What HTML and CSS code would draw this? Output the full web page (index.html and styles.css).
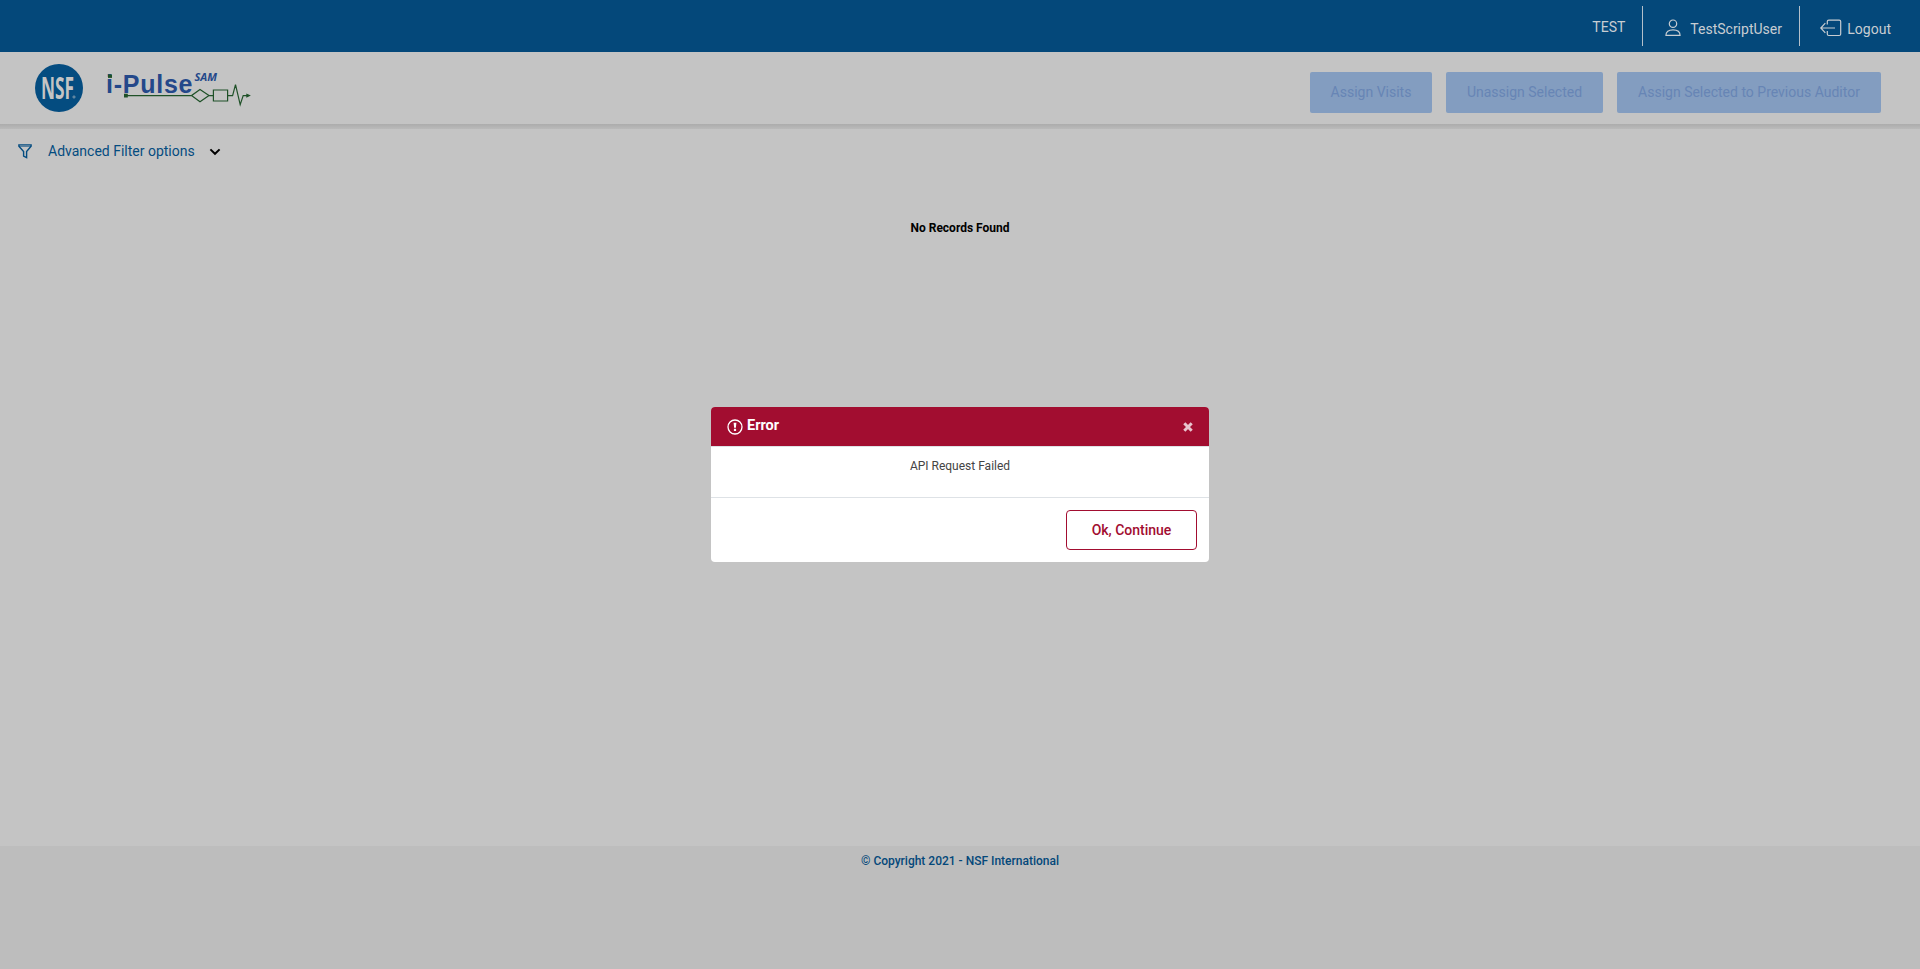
FILE: index.html
```html
<!DOCTYPE html>
<html lang="en">
<head>
<meta charset="utf-8">
<title>i-Pulse SAM</title>
<link rel="stylesheet" href="styles.css">
</head>
<body>
<div class="page">
  <nav class="topbar">
    <span class="env">TEST</span>
    <span class="user">
      <svg width="16" height="18" viewBox="0 0 16 18" fill="none" stroke="currentColor" stroke-width="1.2"><circle cx="8" cy="4.7" r="3.7"/><path d="M.9 16.4C.9 12.7 3.6 10.8 8 10.8s7.1 1.9 7.1 5.6z" stroke-linejoin="round"/></svg>
      TestScriptUser
    </span>
    <span class="logout">
      <svg width="22" height="18" viewBox="0 0 22 18" fill="none" stroke="currentColor" stroke-width="1.2"><path d="M7.3 5.5V2.6Q7.3 1.1 8.8 1.1H19.2Q20.7 1.1 20.7 2.6V15Q20.7 16.5 19.2 16.5H8.8Q7.3 16.5 7.3 15V12M15 9H1M5.3 4.2L.8 9l4.5 4.8"/></svg>
      Logout
    </span>
  </nav>
  <header class="header">
    <div class="brand">
      <svg width="48" height="48" viewBox="0 0 48 48"><circle cx="24" cy="24" r="24" fill="#044c80"/><text class="nsf" x="6" y="34.5" textLength="33" lengthAdjust="spacingAndGlyphs">NSF</text><circle cx="39" cy="33" r="1.1" fill="none" stroke="#c4c4c4" stroke-width=".6"/></svg>
      <svg class="pulse" width="146" height="38" viewBox="0 -4 146 38">
        <text class="name" x="-1" y="19.8" textLength="86.5">i-Pulse</text>
        <path d="M1 1.5h4v3.4h-4z" fill="#1f5128"/>
        <text class="sam" x="87.5" y="8.2" textLength="22.5" lengthAdjust="spacingAndGlyphs">SAM</text>
        <g fill="none" stroke="#1f5128" stroke-width="1.2"><path d="M19 22.6H84.5l8.5-6.1 9 6.1-9 6.1-8.5-6.1M102 22.6h4.4M106.4 17h14.2v11h-14.2zM120.6 22.6h5l2.9-11 4.7 20 3-9h5"/></g>
        <path d="M17 20.7h3.8v3.8h-3.8zM139.3 20.5l4.6 2.1-4.6 2.1z" fill="#1f5128"/>
      </svg>
    </div>
    <div class="actions">
      <button class="action visits" disabled>Assign Visits</button>
      <button class="action unassign" disabled>Unassign Selected</button>
      <button class="action previous" disabled>Assign Selected to Previous Auditor</button>
    </div>
  </header>
  <main class="main">
    <div class="filter">
      <svg width="14" height="15" viewBox="0 0 14 15" fill="none" stroke="#044c80" stroke-width="1.4"><path d="M.9.9h12.2v1.3L8.6 7.6v6.1l-3-1.6V7.6L.9 2.2z"/><path d="M1 2.3h12" stroke-width=".7"/></svg>
      <span class="filter-label">Advanced Filter options</span>
      <svg width="12" height="8" viewBox="0 0 12 8" fill="none" stroke="#000" stroke-width="2"><path d="M1.4 1.4L6 5.8l4.6-4.4"/></svg>
    </div>
    <p class="empty">No Records Found</p>
  </main>
  <footer class="footer">© Copyright 2021 - NSF International</footer>
</div>
<section class="modal" role="dialog">
  <div class="modal-head">
    <svg width="16" height="16" viewBox="0 0 16 16"><circle cx="8" cy="8" r="7" fill="none" stroke="#fff" stroke-width="1.3"/><path d="M6.6 3.7h2.8l-.5 5H7.1zM6.9 9.8h2.2v2.1H6.9z" fill="#fff"/></svg>
    <h1 class="modal-title">Error</h1>
    <svg class="close" width="10" height="10" viewBox="0 0 10 10"><path d="M1.3 1.3l7.4 7.4M8.7 1.3L1.3 8.7" stroke="#e8c4ce" stroke-width="3"/></svg>
  </div>
  <div class="modal-body">API Request Failed</div>
  <div class="modal-foot"><button class="ok">Ok, Continue</button></div>
</section>
</body>
</html>
```
FILE: styles.css
```css
* { box-sizing: border-box; }
body { margin: 0; font: 14px/20px Roboto, sans-serif; background: #c4c4c4; }
button { font: inherit; padding: 0; }
svg { display: block; flex: none; overflow: visible; }
.page { height: 969px; display: flex; flex-direction: column; overflow: hidden; }

.topbar { height: 52px; padding: 6px 29px 0 0; display: flex; justify-content: flex-end; background: #04487a; color: #c8cdd2; }
.env { padding: 11px 17px 0 0; height: 40px; }
.user { display: flex; gap: 9px; height: 40px; width: 158px; padding: 13px 0 0 22px; border-left: 1px solid #b5c0ca; border-right: 1px solid #b5c0ca; }
.logout { display: flex; gap: 5px; padding: 13px 0 0 20px; }

.header { height: 72px; padding: 0 39px 0 35px; display: flex; justify-content: space-between; background: #c4c4c4; }
.brand { display: flex; gap: 24px; padding-top: 12px; }
.pulse { margin-top: 5px; }
.nsf { font: bold 30px "Open Sans", sans-serif; fill: #c4c4c4; }
.name { font: bold 25px "Liberation Sans", Arial, sans-serif; fill: #24488a; }
.sam { font: italic bold 10.5px "Open Sans", sans-serif; fill: #24488a; }
.actions { display: flex; gap: 14px; padding-top: 20px; }
.action { height: 41px; padding-bottom: 2px; border: 0; border-radius: 2px; background: #839dc0; color: #6785b5; }
.visits { width: 122px; }
.unassign { width: 157px; }
.previous { width: 264px; }

.main { flex: 1; padding-top: 17px; background: linear-gradient(#acacac, #bababa) 0 0 / 100% 5px no-repeat; }
.filter { display: flex; align-items: center; height: 20px; padding: 0 18px; }
.filter-label { margin: 0 14px 0 16px; color: #044c80; }
.filter svg { margin-top: 1px; }
.empty { margin: 57px 0 0; text-align: center; font-size: 12px; line-height: 20px; font-weight: 700; color: #000; }
.footer { height: 123px; padding-top: 5px; background: #bdbdbd; color: #04487a; font-size: 12px; font-weight: 500; text-align: center; }

/* Dialog lies over the page */
.modal { position: absolute; top: 407px; left: 711px; width: 498px; height: 155px; display: flex; flex-direction: column; background: #fff; border-radius: 4px; overflow: hidden; }
.modal-head { height: 40px; display: flex; align-items: center; padding: 0 16px; background: #a20d30; border-bottom: 1px solid #dee2e6; }
.modal-title { margin: 0 0 2px 4px; flex: 1; color: #fff; font-size: 14.5px; font-weight: 700; line-height: 20px; }
.modal-body { height: 51px; padding-top: 9px; border-bottom: 1px solid #dee2e6; text-align: center; font-size: 12px; color: #444; }
.modal-foot { flex: 1; display: flex; justify-content: flex-end; padding: 12px 12px 0 0; }
.ok { width: 131px; height: 40px; border: 1px solid #a20d30; border-radius: 4px; background: #fff; color: #a20d30; font-weight: 500; }
```
